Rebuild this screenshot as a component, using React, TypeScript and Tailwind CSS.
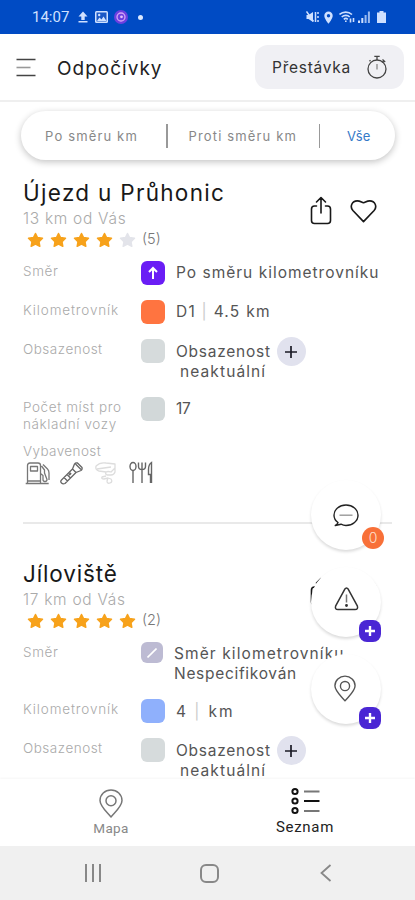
import type { ReactNode } from 'react';
import clsx from 'clsx';

type Place = {
  name: string;
  nameClass: string;
  distance: string;
  rating: number;
  votes: number;
};

const places: Place[] = [
  { name: 'Újezd u Průhonic', nameClass: 'tracking-[1.3px]', distance: '13 km od Vás', rating: 4, votes: 5 },
  { name: 'Jíloviště', nameClass: 'tracking-[0.85px]', distance: '17 km od Vás', rating: 5, votes: 2 },
];

function StatusBar() {
  return (
    <div className="flex h-[34px] shrink-0 items-center bg-[#004bc4] pl-8 pr-[29px] text-[#cfe0ff]">
      <span className="w-[38px] font-[Roboto] text-[15px] leading-none">14:07</span>
      <svg className="ml-2 h-3 w-[10px]" viewBox="0 0 10 12" fill="currentColor">
        <path d="M5 0.5 9.5 5.5H6.7V9H3.3V5.5H0.5ZM0.5 10h9v1.5h-9z" />
      </svg>
      <svg className="ml-[7px] h-3 w-[13px]" viewBox="0 0 13 12">
        <rect width="13" height="12" rx="1.5" fill="currentColor" />
        <path d="M1.500 1.500h10v9h-10z" fill="#1b58c6" />
        <path d="M2 10 4.500 6.500 6.500 8.500 8.500 5.500 11.500 10Z" fill="currentColor" />
        <circle cx="4.200" cy="4" r="1.200" fill="currentColor" />
      </svg>
      <svg className="ml-[6px] h-[14px] w-[14px]" viewBox="0 0 14 14">
        <circle cx="7" cy="7" r="7" fill="#6c3fe0" />
        <circle cx="7" cy="7" r="4" fill="none" stroke="#d5a5f5" strokeWidth="1.3" />
        <circle cx="7.5" cy="6.8" r="1.4" fill="#e3c0fa" />
      </svg>
      <span className="ml-[10px] h-[5px] w-[5px] rounded-full bg-[#dbe8ff]" />
      <span className="flex-1" />
      <svg className="h-3 w-[13px]" viewBox="0 0 13 12" fill="none" stroke="currentColor" strokeWidth="1.5">
        <path d="M0.5 4v4h2l4.5 3V1L2.500 4Z" fill="currentColor" stroke="none" />
        <path d="m0.500 0.500 7 10M9.500 1v10M12 1v2M12 5v2M12 9v2" />
      </svg>
      <svg className="ml-[5px] h-[13px] w-[9px]" viewBox="0 0 9 13" fill="currentColor">
        <path fillRule="evenodd" d="M4.500 0.500a4.200 4.200 0 0 0-4.200 4.200c0 3 4.200 8 4.200 8s4.200-5 4.200-8A4.200 4.200 0 0 0 4.500 0.500Zm0 2.500a1.700 1.700 0 1 1 0 3.400 1.700 1.700 0 0 1 0-3.400Z" />
      </svg>
      <svg className="ml-[6px] h-3 w-4" viewBox="0 0 16 12" fill="none" stroke="currentColor" strokeWidth="1.600">
        <path d="M0.500 3.500C4 0.300 9.500 0.300 13 3.500M2.700 6c2.500-2.200 6-2.200 8 0M4.800 8.300c1.300-1.100 2.700-1.100 4 0" />
        <path d="M6.800 9.500v1.500M11.500 7.500v4M14.500 7v4" />
      </svg>
      <svg className="ml-[3px] h-3 w-3" viewBox="0 0 12 12" fill="currentColor">
        <path d="M0 9.500h2V12H0zM3.300 7h2v5h-2z" />
        <path d="M6.600 4h2v8h-2zM9.900 0.500h2V12h-2z" opacity="0.75" />
      </svg>
      <svg className="ml-[7px] h-3 w-[9px]" viewBox="0 0 9 12" fill="currentColor">
        <path d="M2.500 0h4v1.500H9V12H0V1.500h2.500z" />
      </svg>
    </div>
  );
}

function Header() {
  return (
    <header className="flex h-[68px] shrink-0 items-center border-b-2 border-[#efefef] pl-4 pr-[11px]">
      <svg className="h-[19px] w-[21px]" viewBox="0 0 21 19" fill="none" strokeWidth="1.600">
        <path d="M0.500 1.500h19M0.500 17.500h19" stroke="#444" />
        <path d="M0.500 9.500h14" stroke="#999" />
      </svg>
      <h1 className="ml-[20px] flex-1 whitespace-nowrap pt-[2px] text-[19px] leading-none tracking-[1px] text-[#222]">Odpočívky</h1>
      <button className="flex h-11 w-[149px] items-center justify-between rounded-[13px] bg-[#f0f0f4] pl-[17px] pr-[16px]">
        <span className="whitespace-nowrap pt-[2px] text-[15.500px] leading-none tracking-[0.75px] text-[#333]">Přestávka</span>
        <svg className="h-6 w-[22px]" viewBox="0 0 22 24" fill="none" stroke="#444" strokeWidth="1.300">
          <circle cx="11" cy="14" r="9" />
          <path d="M8.300 1.300h5.400M11 1.300V5M16.500 4.500l2.700 2.400M17.800 5.700l-1.600 1.900M4.500 5.200l-1 1" />
          <path d="M11 9v5.500" stroke="#888" />
        </svg>
      </button>
    </header>
  );
}

function FilterPill() {
  return (
    <div className="ml-[21px] mt-[9px] flex h-[49px] w-[374px] items-center rounded-full bg-white text-[13px] text-[#888] shadow-[0_2px_7px_rgba(0,0,0,0.24)]">
      <span className="w-[145px] whitespace-nowrap pl-[24px] pt-[3px] tracking-[1.15px]">Po směru km</span>
      <span className="h-6 w-[1.500px] bg-[#999]" />
      <span className="w-[151px] whitespace-nowrap pl-[21px] pt-[3px] tracking-[1.15px]">Proti směru km</span>
      <span className="h-6 w-[1.500px] bg-[#999]" />
      <span className="pl-[27px] pt-[3px] tracking-[0.3px] text-[#3479c8]">Vše</span>
    </div>
  );
}

function Star({ filled }: { filled: boolean }) {
  return (
    <svg className={clsx('h-4 w-[17px]', filled ? 'text-[#f7a21b]' : 'text-[#e3e4ea]')} viewBox="0 0 17 16" fill="currentColor" stroke="currentColor" strokeWidth="1.500" strokeLinejoin="round">
      <path d="M8.500 1.500 10.500 5.600 15.500 6.200 12 9.600 12.800 14.300 8.500 12.200 4.200 14.300 5 9.600 1.500 6.200 6.500 5.600Z" />
    </svg>
  );
}

function ShareIcon() {
  return (
    <svg className="h-[29px] w-[22px]" viewBox="0 0 22 29" fill="none" stroke="#181818" strokeWidth="1.600" strokeLinecap="round" strokeLinejoin="round">
      <path d="M6.500 10H4.500Q1.500 10 1.500 13v11.500q0 3 3 3h13q3 0 3-3V13q0-3-3-3h-2M11 17V2M6.500 6 11 1.500 15.500 6" />
    </svg>
  );
}

function HeartIcon() {
  return (
    <svg className="h-6 w-[27px]" viewBox="0 0 28 24" fill="none" stroke="#181818" strokeWidth="1.700" strokeLinejoin="round">
      <path d="M14 23 3 11.500C-0.500 7.500 2 1.500 7.500 1.500c3 0 4.500 1.500 6.500 2 2-.5 3.500-2 6.500-2C26 1.500 28.500 7.500 25 11.500Z" />
    </svg>
  );
}

function PlaceHeading({ place }: { place: Place }) {
  return (
    <div className="flex h-[91px] justify-between">
      <div>
        <h2 className={clsx('pt-[9px] whitespace-nowrap text-[22.500px] leading-[28px] text-[#181818]', place.nameClass)}>{place.name}</h2>
        <p className="h-[22px] whitespace-nowrap text-[15.500px] font-light leading-[24px] tracking-[0.7px] text-[#aaa]">{place.distance}</p>
        <div className="flex h-[21px] items-center gap-[6px] pl-[4px]">
          {[1, 2, 3, 4, 5].map((n) => (
            <Star key={n} filled={n <= place.rating} />
          ))}
          <span className="-mt-px text-[14.500px] font-light leading-none text-[#777]">({place.votes})</span>
        </div>
      </div>
      <div className="mr-[15px] mt-[26px] flex gap-[18px]">
        <ShareIcon />
        <span className="pt-[3px]">
          <HeartIcon />
        </span>
      </div>
    </div>
  );
}

type RowProps = {
  label: ReactNode;
  labelClass?: string;
  height: string;
  tile: string;
  icon?: ReactNode;
  valueClass?: string;
  children: ReactNode;
};

function Row({ label, labelClass = 'tracking-[0.6px]', height, tile, icon, valueClass = 'tracking-[0.9px]', children }: RowProps) {
  return (
    <div className={clsx('flex items-start', height)}>
      <div className={clsx('w-[118px] shrink-0 whitespace-nowrap pt-[2px] text-[13.500px] font-light leading-[17px] text-[#aaa]', labelClass)}>
        {label}
      </div>
      <div className={clsx('flex shrink-0 items-center justify-center rounded-[6px]', tile)}>{icon}</div>
      <div className={clsx('whitespace-nowrap pl-[11px] pt-[2px] text-[15.500px] leading-[20px] text-[#555]', valueClass)}>{children}</div>
    </div>
  );
}

function Occupancy() {
  return (
    <div className="flex items-start pt-px">
      <div>
        <span className="tracking-[0.75px]">Obsazenost</span>
        <br />
        <span className="pl-1 tracking-[1.1px]">neaktuální</span>
      </div>
      <span className="-mt-[5px] ml-[6px] flex h-[29px] w-[29px] items-center justify-center rounded-full bg-[#e1e2ee]">
        <svg className="h-3 w-3" viewBox="0 0 12 12" stroke="#1b1b26" strokeWidth="1.700">
          <path d="M6 0v12M0 6h12" />
        </svg>
      </span>
    </div>
  );
}

function Amenities() {
  return (
    <div className="flex h-[26px] items-center pl-[2px]">
      <svg className="h-6 w-[26px]" viewBox="0 0 26 24" fill="none" stroke="#777" strokeWidth="1.300" strokeLinejoin="round">
        <path d="M0.700 22.500h23M2.500 22.500V4.500Q2.500 2 5 2h8q2.500 0 2.500 2.500v18M5.500 5.500h7v4.500h-7zM15.500 12.500l2.500 2v4q0 2 2 2t2-2L19.500 12v-3l-3-4M18 3.500l4.500 4.500q1.500 1.500 1.500 4v7M2.500 20h13" />
      </svg>
      <svg className="ml-[9px] h-6 w-6" viewBox="0 0 24 24" fill="none" stroke="#666" strokeWidth="1.300" strokeLinejoin="round">
        <path d="m1.500 19 11-11 2-5q1-1.500 3-1l4.500 4.500q.5 2-1 3l-5 2-11 11q-2 1-3.500-.5t0-3ZM12.500 8l3.500 3.500M15.500 3l5.500 5.500M4 16.500l3.500 3.500M7 13.500l3.500 3.500" />
        <path d="m11 12-2 2" strokeWidth="2" />
      </svg>
      <svg className="ml-[10px] h-6 w-6" viewBox="0 0 24 24" fill="none" stroke="#ddd" strokeWidth="1.300" strokeLinejoin="round">
        <path d="M2 5q4-4 10-3l9 1v8q-1 3-4 3h-4q-2-1-1-3 2-1 5 0l4-4M2 5q-1 4 3 5l7 1M3 8l14-2M12 15l-4 1q-1 2 2 2l4-1 3 1q2 3-1 4t-3-2l1-3" />
      </svg>
      <svg className="ml-[11px] h-6 w-6" viewBox="0 0 24 24" fill="none" stroke="#666" strokeWidth="1.400">
        <ellipse cx="4" cy="5.500" rx="3" ry="4" />
        <path d="M4 9.500V22M9.500 1.500v4q0 3 3.500 3t3.500-3v-4M13 1.500V22M22.500 22V1.500q-3 2-3 7v5h3M21.500 14v8" />
      </svg>
    </div>
  );
}

function Badge() {
  return (
    <span className="absolute bottom-[-5px] right-0 flex h-[22px] w-[22px] items-center justify-center rounded-[8px] bg-[#4a26d4]">
      <svg className="h-[10px] w-[10px]" viewBox="0 0 11 11" stroke="#fff" strokeWidth="2.600">
        <path d="M5.500 0v11M0 5.500h11" />
      </svg>
    </span>
  );
}

function PinIcon({ className }: { className: string }) {
  return (
    <svg className={className} viewBox="0 0 24 29" fill="none" stroke="currentColor" strokeWidth="1.500" strokeLinejoin="round">
      <path d="M12 28C8.500 23.500 1 17.500 1 11.500a11 10.500 0 0 1 22 0C23 17.500 15.500 23.500 12 28Z" />
      <circle cx="12" cy="11.800" r="5" />
    </svg>
  );
}

function Fab({ children, badge }: { children: ReactNode; badge: ReactNode }) {
  return (
    <button className="relative flex h-[70px] w-[70px] items-center justify-center rounded-full bg-white shadow-[0_2px_3px_rgba(0,0,0,0.14)]">
      {children}
      {badge}
    </button>
  );
}

function FloatingActions() {
  return (
    <div className="absolute left-[311px] top-[480px] flex flex-col gap-[17px]">
      <Fab
        badge={
          <span className="absolute bottom-[1px] right-[-3px] flex h-[22px] w-[22px] items-center justify-center rounded-full bg-[#f87038] text-[14px] font-light leading-none text-[#ffe0d0]">
            0
          </span>
        }
      >
        <svg className="h-[23px] w-[26px]" viewBox="0 0 26 23" fill="none" stroke="#222" strokeWidth="1.400" strokeLinejoin="round">
          <path d="M5 18.500C2.300 16.500 1 14 1 11.200 1 5.500 6.300 1 13 1s12 4.500 12 10.200-5.300 10.300-12 10.300c-2 0-3.500-.5-5-1.300L2.300 21.500Q4.500 20.500 5 18.500Z" />
          <path d="M6.500 11.200h13" stroke="#999" />
        </svg>
      </Fab>
      <Fab badge={<Badge />}>
        <svg className="mb-[7px] h-6 w-[25px]" viewBox="0 0 25 24" fill="none" stroke="#333" strokeWidth="1.500" strokeLinejoin="round">
          <path d="M10.700 2.300q1.800-2.500 3.600 0l9 16.500q1.200 3.700-2.300 3.700H4q-3.500 0-2.300-3.700Z" />
          <path d="M12.500 7.500v8" stroke="#777" />
          <circle cx="12.500" cy="18.500" r="0.700" fill="#222" />
        </svg>
      </Fab>
      <Fab badge={<Badge />}>
        <PinIcon className="mb-[2px] mr-[2px] h-[27px] w-[22px] text-[#555]" />
      </Fab>
    </div>
  );
}

function BottomNav() {
  return (
    <nav className="flex h-[67px] shrink-0 bg-white font-[Roboto] text-[13.500px] leading-none shadow-[0_-1px_2px_rgba(0,0,0,0.04)]">
      <div className="flex w-[222px] flex-col items-center pt-[10px] text-[#888]">
        <PinIcon className="h-[29px] w-6 text-[#777]" />
        <span className="mt-[4px] tracking-[0.3px]">Mapa</span>
      </div>
      <div className="flex w-[166px] flex-col items-center pt-[8px] text-[#222]">
        <svg className="h-7 w-[29px]" viewBox="0 0 29 28" fill="none" stroke="#111">
          <g strokeWidth="2">
            <circle cx="4" cy="4.500" r="2.600" />
            <circle cx="4" cy="14" r="2.600" />
            <circle cx="4" cy="23.500" r="2.600" />
          </g>
          <path d="M13 14h15.500" strokeWidth="2" />
          <path d="M13 4.500h15.500M13 24h15.500" stroke="#777" strokeWidth="2" />
        </svg>
        <span className="mt-[5px] text-[15px] tracking-[0.7px]">Seznam</span>
      </div>
    </nav>
  );
}

function SystemBar() {
  return (
    <div className="flex h-[54px] shrink-0 items-center bg-[#f0f0f0] pl-[84px] text-[#888]">
      <svg className="h-[18px] w-[18px]" viewBox="0 0 18 18" stroke="currentColor" strokeWidth="2">
        <path d="M2 0v18M9 0v18M16 0v18" />
      </svg>
      <span className="ml-[98px] h-[19px] w-[19px] rounded-[6px] border-2 border-[#888]" />
      <svg className="ml-[101px] h-[18px] w-3" viewBox="0 0 12 18" fill="none" stroke="currentColor" strokeWidth="1.800">
        <path d="M10.500 1 1.500 9l9 8" />
      </svg>
    </div>
  );
}

export default function App() {
  return (
    <div className="relative flex h-[900px] w-[415px] flex-col overflow-hidden bg-white font-[Inter,sans-serif]">
      <StatusBar />
      <Header />
      <main className="relative h-[677px] shrink-0 overflow-hidden">
        <FilterPill />
        <section className="mt-[10px] h-[352px] pl-[23px] pr-[23px]">
          <PlaceHeading place={places[0]} />
          <Row
            label="Směr"
            height="h-[39px]"
            tile="h-6 w-6 bg-[#6a1df5]"
            valueClass="tracking-[1px]"
            icon={
              <svg className="h-[14px] w-[10px]" viewBox="0 0 10 14" fill="none" stroke="#fff" strokeWidth="2">
                <path d="M5 13V2M1 6l4-4 4 4" />
              </svg>
            }
          >
            Po směru kilometrovníku
          </Row>
          <Row label="Kilometrovník" labelClass="tracking-[0.85px]" height="h-[39px]" tile="h-6 w-6 bg-[#ff7440]" valueClass="tracking-[1.25px]">
            D1 <span className="text-[#ccc]">|</span> 4.5 km
          </Row>
          <Row label="Obsazenost" labelClass="tracking-[0.5px]" height="h-[58px]" tile="h-6 w-6 bg-[#d6dbdc]">
            <Occupancy />
          </Row>
          <Row label={<>Počet míst pro<br />nákladní vozy</>} height="h-[45px]" tile="h-6 w-6 bg-[#d2d8d9]" valueClass="tracking-[-0.2px]">
            17
          </Row>
          <p className="h-[18px] text-[13.500px] font-light leading-[18px] tracking-[0.4px] text-[#aaa]">Vybavenost</p>
          <Amenities />
        </section>
        <hr className="ml-[23px] w-[369px] border-t-2 border-[#e9e9e9]" />
        <section className="mt-[27px] pl-[23px] pr-[23px]">
          <PlaceHeading place={places[1]} />
          <Row
            label="Směr"
            height="h-[57px]"
            tile="h-[21px] w-[22px] bg-[#bdbbd3]"
            icon={
              <svg className="h-[10px] w-[10px]" viewBox="0 0 10 10" stroke="#fff" strokeWidth="1.600">
                <path d="M0.500 9.500l9-9" />
              </svg>
            }
          >
            <span className="tracking-[1.1px]">Směr kilometrovníku</span>
            <br />
            <span className="tracking-[0.7px]">Nespecifikován</span>
          </Row>
          <Row label="Kilometrovník" labelClass="tracking-[0.85px]" height="h-[39px]" tile="h-6 w-6 bg-[#8fb0fc]">
            <div className="pt-px">
              4 <span className="mx-[2px] text-[#ccc]">|</span> <span className="pl-px tracking-[2px]">km</span>
            </div>
          </Row>
          <Row label="Obsazenost" labelClass="tracking-[0.5px]" height="h-[58px]" tile="h-6 w-6 bg-[#d6dbdc]">
            <Occupancy />
          </Row>
        </section>
      </main>
      <BottomNav />
      <SystemBar />
      <FloatingActions />
    </div>
  );
}
